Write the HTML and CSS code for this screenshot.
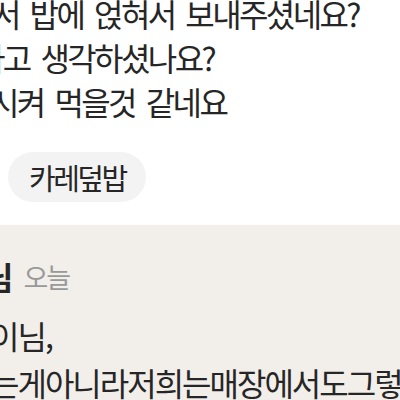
FILE: index.html
```html
<!DOCTYPE html>
<html lang="ko">
<head>
    <meta charset="UTF-8">
    <meta name="viewport" content="width=device-width, initial-scale=1.0">
    <title>리뷰</title>
    <link rel="stylesheet" href="styles.css">
</head>
<body>
    <div class="review">
        <p class="review-text">
            <span class="line line-1">서 밥에 얹혀서 보내주셨네요?</span>
            <span class="line line-2">라고 생각하셨나요?</span>
            <span class="line line-3">시켜 먹을것 같네요</span>
        </p>
        <div class="menu-tags">
            <span class="tag">카레덮밥</span>
        </div>
    </div>

    <div class="reply">
        <div class="reply-head">
            <strong class="reply-name">님</strong>
            <span class="reply-date">오늘</span>
        </div>
        <p class="reply-text">
            <span class="line line-4">이님,</span>
            <span class="line line-5">는게아니라저희는매장에서도그렇게</span>
        </p>
    </div>
</body>
</html>
```

FILE: styles.css
```css
body {
    margin: 0;
    font-family: "Noto Sans CJK KR", sans-serif;
    color: #262626;
    background-color: #fff;
    overflow: hidden;
}
.review {
    margin-top: -9px;
    padding-bottom: 23px;
}
.review-text,
.reply-text {
    margin: 0;
    font-size: 32px;
    line-height: 44px;
    letter-spacing: -2.6px;
    word-spacing: 4.4px;
    white-space: nowrap;
}
.line {
    display: block;
}
/* 화면 밖으로 잘린 줄 시작 위치 */
.line-1 { margin-left: -8px; }
.line-2 { margin-left: -24px; }
.line-3 { margin-left: -10px; }
.line-4 { margin-left: -10px; }
.line-5 { margin-left: -10px; }
.menu-tags {
    margin-top: 29px;
    padding-left: 8px;
}
.tag {
    display: inline-block;
    height: 50px;
    line-height: 50px;
    padding: 0 20px 0 21px;
    border-radius: 25px;
    background-color: #f3f3f3;
    font-size: 29px;
    letter-spacing: -2.5px;
}
.reply {
    background-color: #f2efea;
    padding-top: 36px;
    height: 400px;
}
.reply-head {
    display: flex;
    align-items: center;
    gap: 12px;
    height: 30px;
    margin-left: -16px;
}
.reply-name {
    font-size: 32px;
    font-weight: 700;
    letter-spacing: -2px;
}
.reply-date {
    font-size: 27px;
    color: #999;
    letter-spacing: -2px;
}
.reply-text {
    margin-top: 21px;
    line-height: 47px;
    letter-spacing: -2px;
}
```
